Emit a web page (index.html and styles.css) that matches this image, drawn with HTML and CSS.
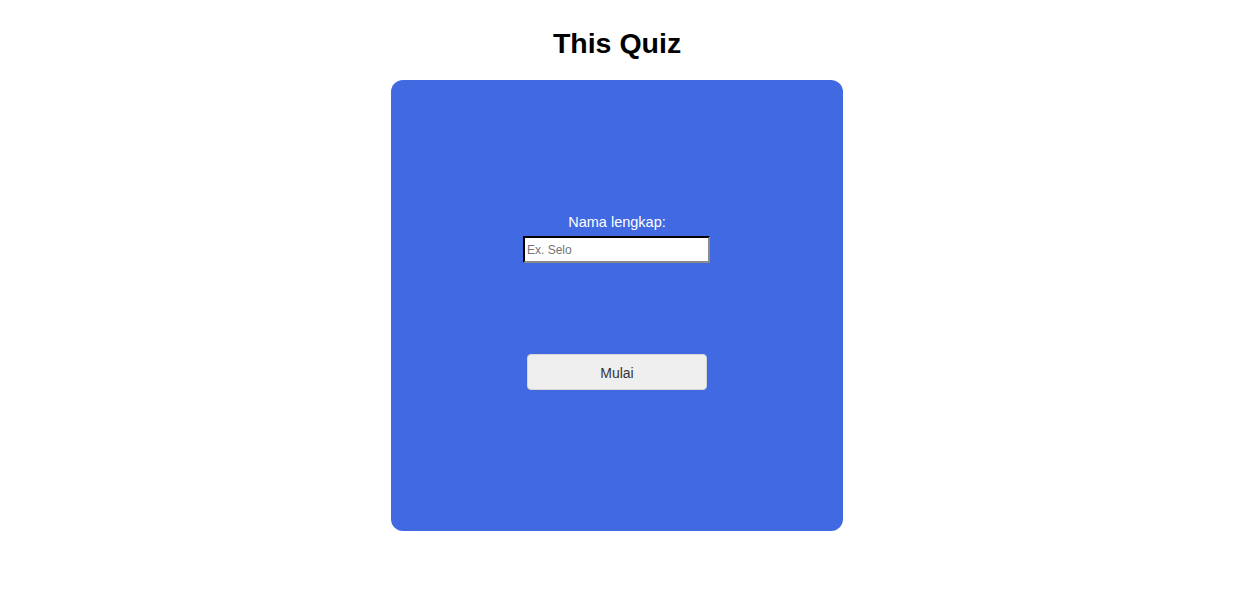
FILE: index.html
```html
<!DOCTYPE html>
<html>
<head>
<meta charset="utf-8">
<link rel="stylesheet" href="styles.css">
</head>
<body>
<div class="page">
  <h1 class="title">This Quiz</h1>
  <div class="card">
    <label class="label" for="nama">Nama lengkap:</label>
    <input class="input" id="nama" type="text" placeholder="Ex. Selo">
    <button class="btn">Mulai</button>
  </div>
</div>
</body>
</html>
```
FILE: styles.css
```css
html, body {
  margin: 0;
  padding: 0;
  background: #fff;
}
.page {
  display: flex;
  flex-direction: column;
  align-items: center;
  font-family: "Liberation Sans", Arial, sans-serif;
}
.title {
  margin: 27px 0 0;
  height: 53px;
  font-size: 28.5px;
  line-height: 32px;
  font-weight: bold;
  color: #000;
}
.card {
  box-sizing: border-box;
  width: 452px;
  height: 451px;
  background: #4169e1;
  border-radius: 12px;
  display: flex;
  flex-direction: column;
  align-items: center;
  padding-top: 133px;
}
.label {
  color: #fff;
  font-size: 14.5px;
  line-height: 18px;
  margin-bottom: 5px;
}
.input {
  box-sizing: border-box;
  width: 187px;
  height: 27px;
  margin-right: 1px;
  border: 2px inset #767676;
  border-color: #2b2b2b #8a8a8a #8a8a8a #2b2b2b;
  padding: 0 2px;
  font-family: "Liberation Sans", Arial, sans-serif;
  font-size: 12px;
  background: #fff;
  outline: none;
}
.input::placeholder {
  color: #757575;
}
.btn {
  box-sizing: border-box;
  margin-top: 91px;
  width: 180px;
  height: 36px;
  padding-top: 2px;
  background: #efefef;
  border: 1px solid #d6d6d6;
  border-radius: 4px;
  font-family: "Liberation Sans", Arial, sans-serif;
  font-size: 14px;
  color: #333;
}
```
